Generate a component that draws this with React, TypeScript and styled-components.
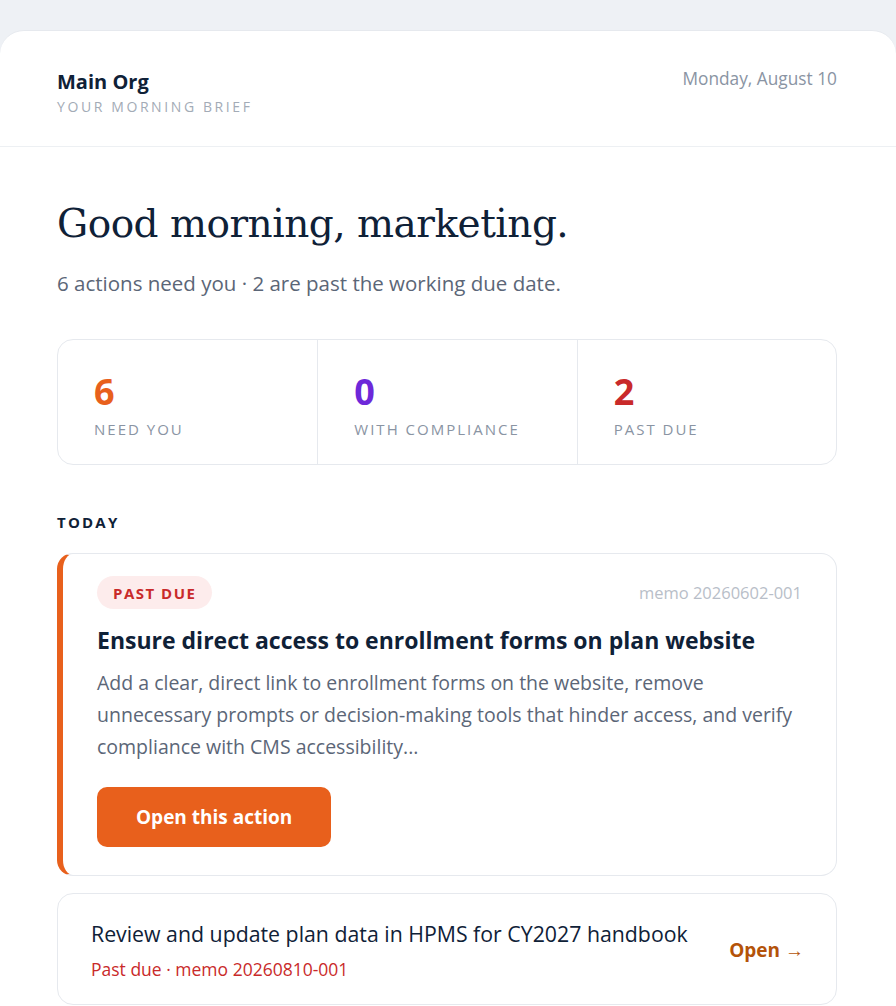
import React from 'react';
import styled, { createGlobalStyle } from 'styled-components';

const GlobalStyle = createGlobalStyle`
  html, body {
    margin: 0;
    padding: 0;
    background: #eef1f5;
  }
  body {
    font-family: 'Open Sans', 'Noto Sans', sans-serif;
    color: #0f2137;
  }
`;

const stats = [
  { value: '6', label: 'Need you', color: '#e8601c' },
  { value: '0', label: 'With compliance', color: '#6d28d9' },
  { value: '2', label: 'Past due', color: '#c92a2a' },
];

export default function App() {
  return (
    <>
      <GlobalStyle />
      <Page>
        <Sheet>
          <Header>
            <Brand>
              <OrgName>Main Org</OrgName>
              <Tagline>Your morning brief</Tagline>
            </Brand>
            <DateText>Monday, August 10</DateText>
          </Header>

          <Body>
            <Greeting>Good morning, marketing.</Greeting>
            <Summary>6 actions need you · 2 are past the working due date.</Summary>

            <StatsBox>
              {stats.map((s) => (
                <Stat key={s.label}>
                  <StatValue $color={s.color}>{s.value}</StatValue>
                  <StatLabel>{s.label}</StatLabel>
                </Stat>
              ))}
            </StatsBox>

            <SectionTitle>Today</SectionTitle>

            <FeatureCard>
              <CardTop>
                <Badge>Past due</Badge>
                <Memo>memo 20260602-001</Memo>
              </CardTop>
              <CardTitle>Ensure direct access to enrollment forms on plan website</CardTitle>
              <CardText>
                Add a clear, direct link to enrollment forms on the website, remove
                unnecessary prompts or decision-making tools that hinder access, and verify
                compliance with CMS accessibility...
              </CardText>
              <PrimaryButton>Open this action</PrimaryButton>
            </FeatureCard>

            <RowCard>
              <RowInfo>
                <RowTitle>Review and update plan data in HPMS for CY2027 handbook</RowTitle>
                <RowMeta>Past due · memo 20260810-001</RowMeta>
              </RowInfo>
              <RowLink>Open →</RowLink>
            </RowCard>
          </Body>
        </Sheet>
      </Page>
    </>
  );
}

const Page = styled.div`
  padding-top: 30px;
  min-height: 100vh;
  box-sizing: border-box;
`;

const Sheet = styled.div`
  background: #ffffff;
  border-radius: 24px 24px 0 0;
  border-top: 1px solid #e6e9ee;
  min-height: 976px;
`;

const Header = styled.header`
  display: flex;
  justify-content: space-between;
  align-items: flex-start;
  padding: 38px 59px 29px 57px;
  border-bottom: 1px solid #edf0f3;
`;

const Brand = styled.div`
  display: flex;
  flex-direction: column;
`;

const OrgName = styled.div`
  font-size: 20px;
  font-weight: 700;
  line-height: 26px;
  color: #0f2137;
`;

const Tagline = styled.div`
  margin-top: 2px;
  font-size: 14px;
  line-height: 20px;
  letter-spacing: 2.6px;
  text-transform: uppercase;
  color: #a3abb6;
`;

const DateText = styled.div`
  font-size: 17.3px;
  line-height: 20px;
  color: #8a94a3;
`;

const Body = styled.main`
  padding: 0 59px 0 57px;
`;

const Greeting = styled.h1`
  margin: 50px 0 0;
  font-family: 'DejaVu Serif', Georgia, serif;
  font-weight: 400;
  font-size: 39px;
  line-height: 54px;
  letter-spacing: -0.5px;
  color: #0f2137;
`;

const Summary = styled.p`
  margin: 17px 0 0;
  font-size: 20.5px;
  line-height: 30px;
  color: #5b6677;
`;

const StatsBox = styled.section`
  margin-top: 41px;
  display: grid;
  grid-template-columns: repeat(3, 1fr);
  border: 1px solid #e6e9ee;
  border-radius: 16px;
`;

const Stat = styled.div`
  padding: 30px 36px 24px;
  & + & {
    border-left: 1px solid #e6e9ee;
  }
`;

const StatValue = styled.div<{ $color: string }>`
  font-size: 36px;
  font-weight: 700;
  line-height: 44px;
  color: ${(p) => p.$color};
`;

const StatLabel = styled.div`
  margin-top: 4px;
  font-size: 15px;
  line-height: 22px;
  letter-spacing: 2px;
  text-transform: uppercase;
  color: #8a94a3;
`;

const SectionTitle = styled.h2`
  margin: 46px 0 20px;
  font-size: 15px;
  font-weight: 700;
  line-height: 22px;
  letter-spacing: 2.2px;
  text-transform: uppercase;
  color: #0f2137;
`;

const FeatureCard = styled.article`
  border: 1px solid #e6e9ee;
  border-left: 6px solid #e8601c;
  border-radius: 16px;
  padding: 22px 34px 28px 34px;
`;

const CardTop = styled.div`
  display: flex;
  justify-content: space-between;
  align-items: center;
`;

const Badge = styled.span`
  display: inline-flex;
  align-items: center;
  height: 33px;
  padding: 0 16px;
  border-radius: 17px;
  background: #fdecec;
  color: #c92a2a;
  font-size: 15px;
  font-weight: 700;
  letter-spacing: 1.5px;
  text-transform: uppercase;
`;

const Memo = styled.span`
  font-size: 16.5px;
  color: #b8bec8;
`;

const CardTitle = styled.h3`
  margin: 15px 0 0;
  font-size: 23px;
  font-weight: 700;
  line-height: 32px;
  color: #0f2137;
`;

const CardText = styled.p`
  margin: 11px 0 0;
  font-size: 19.5px;
  line-height: 32px;
  color: #5b6677;
`;

const PrimaryButton = styled.button`
  margin-top: 24px;
  height: 60px;
  padding: 0 39px;
  border: none;
  border-radius: 10px;
  background: #e8601c;
  color: #ffffff;
  font-family: inherit;
  font-size: 19px;
  font-weight: 700;
  cursor: pointer;
`;

const RowCard = styled.article`
  margin-top: 17px;
  display: flex;
  align-items: center;
  justify-content: space-between;
  border: 1px solid #e6e9ee;
  border-radius: 16px;
  padding: 25px 32px 23px 33px;
`;

const RowInfo = styled.div`
  display: flex;
  flex-direction: column;
`;

const RowTitle = styled.div`
  font-size: 21.3px;
  font-weight: 500;
  line-height: 30px;
  color: #0f2137;
`;

const RowMeta = styled.div`
  margin-top: 8px;
  font-size: 17.5px;
  line-height: 24px;
  color: #c92a2a;
`;

const RowLink = styled.a`
  font-size: 19px;
  font-weight: 700;
  color: #b45309;
  white-space: nowrap;
  cursor: pointer;
`;
